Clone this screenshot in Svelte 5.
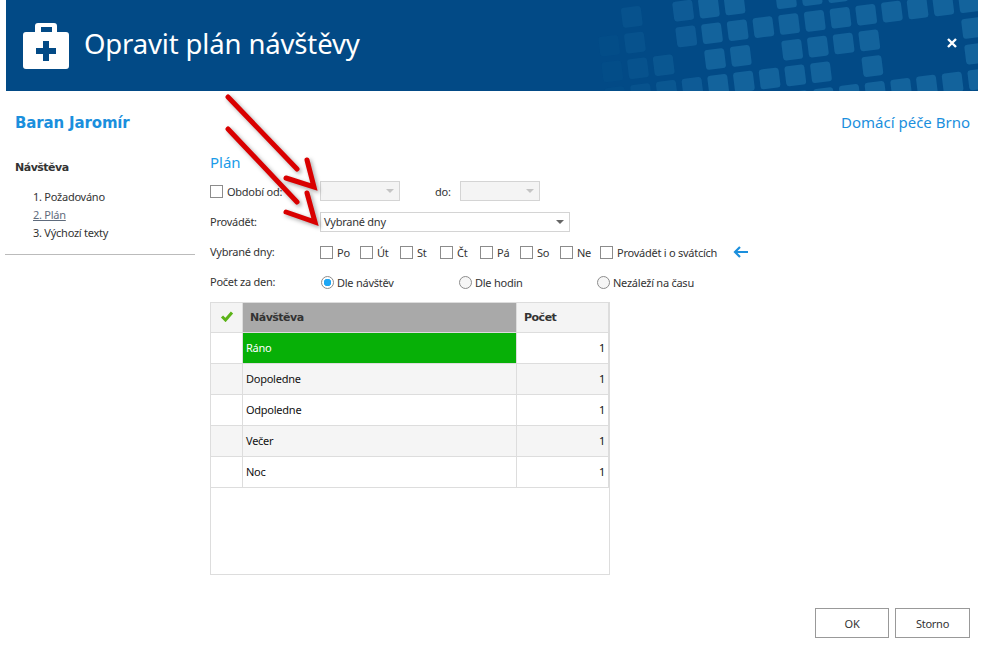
<script>
  const days = ['Po', 'Út', 'St', 'Čt', 'Pá', 'So', 'Ne', 'Provádět i o svátcích'];
  const visits = ['Ráno', 'Dopoledne', 'Odpoledne', 'Večer', 'Noc'];
  const steps = ['1. Požadováno', '2. Plán', '3. Výchozí texty'];
  const counts = [
    { label: 'Dle návštěv', on: true },
    { label: 'Dle hodin', on: false },
    { label: 'Nezáleží na času', on: false }
  ];

  // header tile pattern: [row, list of columns]
  const tileRows = [
    [-1, [-3, -1, 0, 1, 3, 4, 5]],
    [0, [-4, -3, -1, 0, 1, 2, 3, 4, 5, 6, 7, 8, 9, 10]],
    [1, [-4, -3, -2, 0, 1, 3, 4, 5, 6, 10]],
    [2, [-4, -3, -2, -1, 0, 1, 2, 3, 4, 6, 10]],
    [3, [3, 4, 5, 6, 7, 8, 9, 10]]
  ];
  const tiles = tileRows.flatMap(([r, cols]) =>
    cols.map((c) => ({
      x: 712 + c * 25.7 + r * 3.1,
      y: 33.3 - c * 3.1 + r * 25.7,
      o: c < 0 ? 0.12 + (c + 4) * 0.2 : 1
    }))
  );
</script>

<div class="page">
  <header class="top">
    <svg class="tiles" width="972" height="91" viewBox="6 0 972 91">
      {#each tiles as t}
        <rect
          x={t.x - 10}
          y={t.y - 10}
          width="20"
          height="20"
          rx="3"
          fill="#13639c"
          opacity={t.o}
          transform="rotate(-7 {t.x} {t.y})"
        />
      {/each}
    </svg>
    <svg class="case" width="46" height="46" viewBox="0 0 46 46">
      <path
        fill="#fff"
        fill-rule="evenodd"
        d="M15 0h16a3 3 0 0 1 3 3v6h9a3 3 0 0 1 3 3v31a3 3 0 0 1-3 3H3a3 3 0 0 1-3-3V12a3 3 0 0 1 3-3h9V3a3 3 0 0 1 3-3zM18 4v5h11V4z"
      />
      <path fill="#024a86" d="M20 18h6v7h7v6h-7v7h-6v-7h-7v-6h7z" />
    </svg>
    <h1>Opravit plán návštěvy</h1>
    <svg class="close" width="10" height="10" viewBox="0 0 10 10">
      <path d="M1 1l8 8M9 1l-8 8" stroke="#fff" stroke-width="2.4" />
    </svg>
  </header>

  <div class="person">
    <span class="name">Baran Jaromír</span>
    <span class="org">Domácí péče Brno</span>
  </div>

  <div class="content">
    <aside class="side">
      <div class="side-title">Návštěva</div>
      <ul>
        {#each steps as step, i}
          <li class:current={i === 1}>{step}</li>
        {/each}
      </ul>
    </aside>

    <main class="form">
      <h2>Plán</h2>

      <div class="row">
        <label class="lead"><span class="box"></span>Období od:</label>
        <div class="combo off w80"><i></i></div>
        <span class="do">do:</span>
        <div class="combo off w80"><i></i></div>
      </div>

      <div class="row">
        <span class="lead">Provádět:</span>
        <div class="combo w250">Vybrané dny<i></i></div>
      </div>

      <div class="row up">
        <span class="lead">Vybrané dny:</span>
        {#each days as day}
          <label class="day"><span class="box"></span>{day}</label>
        {/each}
        <svg class="back" width="16" height="12" viewBox="0 0 16 12">
          <path d="M15 6H2M7 1L2 6l5 5" fill="none" stroke="#1b8fdd" stroke-width="2.2" />
        </svg>
      </div>

      <div class="row up">
        <span class="lead">Počet za den:</span>
        {#each counts as c}
          <label class="radio-item"><span class="radio" class:on={c.on}></span>{c.label}</label>
        {/each}
      </div>

      <div class="grid">
        <table>
          <thead>
            <tr>
              <th class="check">
                <svg width="14" height="12" viewBox="0 0 14 12">
                  <path d="M2 6.5l3.5 3.5L12 2.5" fill="none" stroke="#5cb318" stroke-width="3" />
                </svg>
              </th>
              <th class="dark">Návštěva</th>
              <th class="num-head">Počet</th>
            </tr>
          </thead>
          <tbody>
            {#each visits as v, i}
              <tr class:alt={i % 2 === 1}>
                <td></td>
                <td class:picked={i === 0}>{v}</td>
                <td class="num">1</td>
              </tr>
            {/each}
          </tbody>
        </table>
      </div>
    </main>
  </div>

  <footer class="actions">
    <button class="ok">OK</button>
    <button>Storno</button>
  </footer>

  <svg class="marks" width="985" height="651" viewBox="0 0 985 651">
    <g fill="none" stroke="#d90000" stroke-linecap="round" stroke-linejoin="miter">
      <path stroke-width="5" d="M228 97L297 169" />
      <path stroke-width="5" d="M307 160L314 187L286 178" />
      <path stroke-width="5" d="M228 129L297 202" />
      <path stroke-width="5" d="M307 193L315 222L286 212" />
    </g>
  </svg>
</div>

<style>
  :global(body) {
    margin: 0;
    background: #fff;
  }

  .page {
    position: relative;
    width: 985px;
    height: 651px;
    overflow: hidden;
    font-family: "Noto Sans", sans-serif;
    font-size: 11px;
    letter-spacing: -0.25px;
    color: #333;
  }

  .top {
    position: relative;
    display: flex;
    align-items: center;
    gap: 15px;
    height: 91px;
    margin: 0 7px 0 6px;
    padding-left: 17px;
    background: #024a86;
    overflow: hidden;
  }

  .tiles {
    position: absolute;
    left: 0;
    top: 0;
  }

  .case,
  h1 {
    position: relative;
  }

  h1 {
    margin: 0 0 4px;
    font-size: 27.5px;
    font-weight: 400;
    letter-spacing: -0.15px;
    color: #fff;
  }

  .close {
    position: absolute;
    right: 21px;
    top: 38px;
  }

  .person {
    display: flex;
    justify-content: space-between;
    align-items: center;
    height: 22px;
    margin-top: 20px;
    padding: 0 15px;
  }

  .name {
    padding-top: 2px;
    font-family: "DejaVu Sans", sans-serif;
    font-size: 15px;
    font-weight: 700;
    letter-spacing: -0.15px;
    color: #1b8fdd;
  }

  .org {
    font-size: 15px;
    letter-spacing: 0;
    color: #1b8fdd;
  }

  .content {
    display: flex;
  }

  .side {
    width: 190px;
    height: 122px;
    margin-left: 5px;
    padding-top: 26px;
    box-sizing: border-box;
    border-bottom: 1px solid #bbb;
  }

  .side-title {
    padding-left: 10px;
    line-height: 18px;
    font-family: "DejaVu Sans", sans-serif;
    font-weight: 700;
    letter-spacing: -0.5px;
  }

  ul {
    margin: 11px 0 0;
    padding: 0 0 0 28px;
    list-style: none;
  }

  li {
    line-height: 18px;
  }

  li.current {
    color: #5f6b7c;
    text-decoration: underline;
  }

  .form {
    margin-left: 15px;
    padding-top: 17px;
  }

  h2 {
    height: 26px;
    margin: 0;
    font-size: 15px;
    font-weight: 400;
    line-height: 24px;
    letter-spacing: 0;
    color: #1b9be8;
  }

  .row {
    display: flex;
    align-items: center;
    height: 30px;
    margin-bottom: 0.5px;
  }

  .lead {
    display: flex;
    align-items: center;
    width: 110px;
  }

  .row.up .lead {
    padding-bottom: 2px;
  }

  .box {
    flex: none;
    width: 11px;
    height: 11px;
    margin-right: 4px;
    border: 1px solid #8c8c8c;
    background: #fff;
  }

  .combo {
    position: relative;
    box-sizing: border-box;
    height: 20px;
    padding-left: 3px;
    border: 1px solid #d4d4d4;
    line-height: 18px;
  }

  .combo i {
    position: absolute;
    right: 5px;
    top: 7px;
    border: 4px solid transparent;
    border-top-color: #666;
    border-bottom: 0;
  }

  .combo.off {
    background: #f4f4f4;
  }

  .combo.off i {
    border-top-color: #c4c4c4;
  }

  .w80 {
    width: 80px;
  }

  .w250 {
    width: 250px;
  }

  .do {
    width: 25px;
    margin-left: 35px;
  }

  .day {
    display: flex;
    align-items: center;
    width: 40px;
  }

  .day:last-of-type {
    width: auto;
  }

  .back {
    margin-left: 16px;
  }

  .radio-item {
    display: flex;
    align-items: center;
    width: 138px;
  }

  .radio {
    box-sizing: border-box;
    width: 13px;
    height: 13px;
    margin: 0 3px 0 1px;
    border: 1px solid #8c8c8c;
    border-radius: 50%;
    background: #f6f6f6;
  }

  .radio.on {
    background: radial-gradient(circle, #1ea7f5 0 3.5px, #fff 4px);
  }

  .grid {
    box-sizing: border-box;
    width: 400px;
    height: 273px;
    margin-top: 4px;
    border: 1px solid #ddd;
  }

  table {
    width: 398px;
    border-collapse: separate;
    border-spacing: 0;
    table-layout: fixed;
  }

  th,
  td {
    box-sizing: border-box;
    padding: 0;
    border-right: 1px solid #ddd;
    border-bottom: 1px solid #ddd;
  }

  th {
    height: 30px;
    padding-left: 7px;
    text-align: left;
    font-family: "DejaVu Sans", sans-serif;
    font-size: 11px;
    letter-spacing: -0.5px;
    background: #f4f4f4;
  }

  th:nth-child(1),
  td:nth-child(1) {
    width: 32px;
  }

  th:nth-child(2),
  td:nth-child(2) {
    width: 274px;
  }

  th.check {
    padding: 0;
    text-align: center;
  }

  th.dark {
    background: #a9a9a9;
  }

  td {
    height: 31px;
    padding-left: 3px;
    color: #111;
  }

  td:first-child {
    padding: 0;
  }

  .alt td {
    background: #f5f5f5;
  }

  td.picked {
    background: #07b007;
    color: #fff;
  }

  td.num {
    padding-right: 3px;
    text-align: right;
  }

  .actions {
    position: absolute;
    right: 15px;
    top: 608px;
    display: flex;
    gap: 6px;
  }

  button {
    width: 75px;
    height: 30px;
    padding: 0;
    border: 1px solid #999;
    background: #fff;
    font: inherit;
    letter-spacing: inherit;
    color: #333;
  }

  button.ok {
    width: 74px;
  }

  .marks {
    position: absolute;
    left: 0;
    top: 0;
    pointer-events: none;
    filter: drop-shadow(2px 2px 2px rgba(0, 0, 0, 0.35));
  }
</style>
